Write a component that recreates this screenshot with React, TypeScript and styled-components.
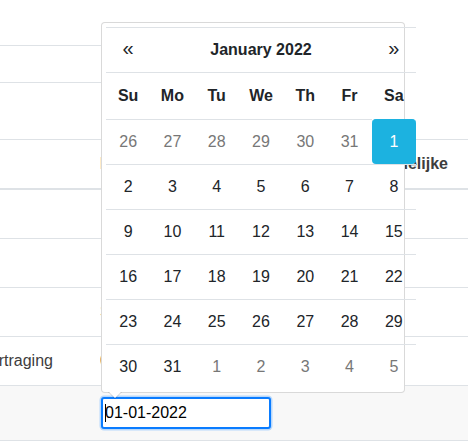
import React from "react";
import styled, { createGlobalStyle } from "styled-components";

const Global = createGlobalStyle`
  html, body { margin: 0; padding: 0; background: #fff; }
  body {
    font-family: "Liberation Sans", Arial, Helvetica, sans-serif;
    overflow: hidden;
  }
  * { box-sizing: border-box; }
`;

const Page = styled.div`
  position: relative;
  width: 468px;
  height: 443px;
  overflow: hidden;
  background: #fff;
  color: #3d3d3d;
  font-size: 16px;
`;

const TopRows = styled.div`
  display: flex;
  flex-direction: column;
  width: 300px;
`;

const TopRow = styled.div<{ $h: number }>`
  height: ${(p) => p.$h}px;
  border-bottom: 1px solid #dee2e6;
`;

const WideRow = styled.div`
  height: 57px;
  border-bottom: 1px solid #dee2e6;
`;

const DataTable = styled.div`
  display: flex;
  flex-direction: column;
  width: 500px;
  margin-left: -32px;
`;

const TRow = styled.div<{ $head?: boolean; $muted?: boolean }>`
  display: grid;
  grid-template-columns: 120px 211px 1fr;
  background: ${(p) => (p.$muted ? "#f8f8f8" : "transparent")};
  border-bottom: ${(p) => (p.$head ? "2px" : "1px")} solid #dee2e6;
  font-weight: ${(p) => (p.$head ? 700 : 400)};
`;

const TCell = styled.div<{ $tight?: boolean }>`
  min-height: ${(p) => (p.$tight ? "54px" : "48px")};
  padding: ${(p) => (p.$tight ? "11px 12px" : "12px")};
  line-height: 24px;
  white-space: nowrap;
  position: relative;
`;

const Field = styled.div`
  position: relative;
  width: 170px;
  height: 32px;
  margin-left: 1px;
`;

const DateInput = styled.input`
  display: block;
  width: 170px;
  height: 32px;
  border: 2px solid #0a7cff;
  border-radius: 3px;
  box-shadow: 0 0 0 1.5px #b8d8fb;
  padding: 0 2px;
  font-family: "Liberation Sans", Arial, sans-serif;
  font-size: 16px;
  color: #000;
  background: #fff;
  outline: none;
`;

const Caret = styled.span`
  position: absolute;
  left: 4px;
  top: 7px;
  width: 1px;
  height: 18px;
  background: #000;
`;

const Popup = styled.div`
  position: absolute;
  left: 101px;
  top: 22px;
  width: 304px;
  height: 371px;
  padding: 4px;
  background: #fff;
  border: 1px solid rgba(0, 0, 0, 0.15);
  border-radius: 4px;
  z-index: 10;

  &::before {
    content: "";
    position: absolute;
    left: 6px;
    bottom: -7px;
    border-left: 7px solid transparent;
    border-right: 7px solid transparent;
    border-top: 7px solid rgba(0, 0, 0, 0.15);
  }
  &::after {
    content: "";
    position: absolute;
    left: 7px;
    bottom: -6px;
    border-left: 6px solid transparent;
    border-right: 6px solid transparent;
    border-top: 6px solid #fff;
  }
`;

const CalGrid = styled.div`
  display: grid;
  grid-template-columns: repeat(7, 1fr);
  width: 310px;
  color: #212529;
`;

const NavCell = styled.div`
  height: 45px;
  border-top: 1px solid #dee2e6;
  display: flex;
  align-items: center;
  justify-content: center;
  font-size: 20px;
  font-weight: 400;
  padding-bottom: 3px;
`;

const TitleCell = styled.div`
  grid-column: span 5;
  height: 45px;
  border-top: 1px solid #dee2e6;
  display: flex;
  align-items: center;
  justify-content: center;
  font-weight: 700;
`;

const DowCell = styled.div`
  height: 47px;
  border-top: 1px solid #dee2e6;
  display: flex;
  align-items: center;
  justify-content: center;
  font-weight: 700;
`;

const DayCell = styled.div<{ $muted?: boolean; $active?: boolean }>`
  height: 45px;
  border-top: 1px solid ${(p) => (p.$active ? "#1cb2e0" : "#dee2e6")};
  display: flex;
  align-items: center;
  justify-content: center;
  color: ${(p) => (p.$active ? "#fff" : p.$muted ? "#777" : "#212529")};
  background: ${(p) => (p.$active ? "#1cb2e0" : "transparent")};
  border-radius: ${(p) => (p.$active ? "4px" : "0")};
`;

const dows = ["Su", "Mo", "Tu", "We", "Th", "Fr", "Sa"];

type Day = { n: number; muted?: boolean; active?: boolean };

const weeks: Day[][] = [
  [{ n: 26, muted: true }, { n: 27, muted: true }, { n: 28, muted: true }, { n: 29, muted: true }, { n: 30, muted: true }, { n: 31, muted: true }, { n: 1, active: true }],
  [2, 3, 4, 5, 6, 7, 8].map((n) => ({ n })),
  [9, 10, 11, 12, 13, 14, 15].map((n) => ({ n })),
  [16, 17, 18, 19, 20, 21, 22].map((n) => ({ n })),
  [23, 24, 25, 26, 27, 28, 29].map((n) => ({ n })),
  [{ n: 30 }, { n: 31 }, { n: 1, muted: true }, { n: 2, muted: true }, { n: 3, muted: true }, { n: 4, muted: true }, { n: 5, muted: true }],
];

export default function App() {
  return (
    <Page>
      <Global />
      <TopRows>
        <TopRow $h={46} />
        <TopRow $h={37} />
      </TopRows>
      <WideRow />
      <DataTable>
        <TRow $head>
          <TCell />
          <TCell>Datum</TCell>
          <TCell>Verantwoordelijke</TCell>
        </TRow>
        <TRow>
          <TCell />
          <TCell />
          <TCell />
        </TRow>
        <TRow>
          <TCell />
          <TCell />
          <TCell />
        </TRow>
        <TRow>
          <TCell />
          <TCell>Status</TCell>
          <TCell />
        </TRow>
        <TRow>
          <TCell>Vertraging</TCell>
          <TCell>0 dagen</TCell>
          <TCell />
        </TRow>
        <TRow $muted>
          <TCell $tight />
          <TCell $tight>
            <Field>
              <DateInput readOnly value="01-01-2022" />
              <Caret />
            </Field>
          </TCell>
          <TCell $tight />
        </TRow>
      </DataTable>

      <Popup>
        <CalGrid>
          <NavCell>«</NavCell>
          <TitleCell>January 2022</TitleCell>
          <NavCell>»</NavCell>
          {dows.map((d) => (
            <DowCell key={d}>{d}</DowCell>
          ))}
          {weeks.map((w, wi) =>
            w.map((d, di) => (
              <DayCell key={`${wi}-${di}`} $muted={d.muted} $active={d.active}>
                {d.n}
              </DayCell>
            ))
          )}
        </CalGrid>
      </Popup>
    </Page>
  );
}
